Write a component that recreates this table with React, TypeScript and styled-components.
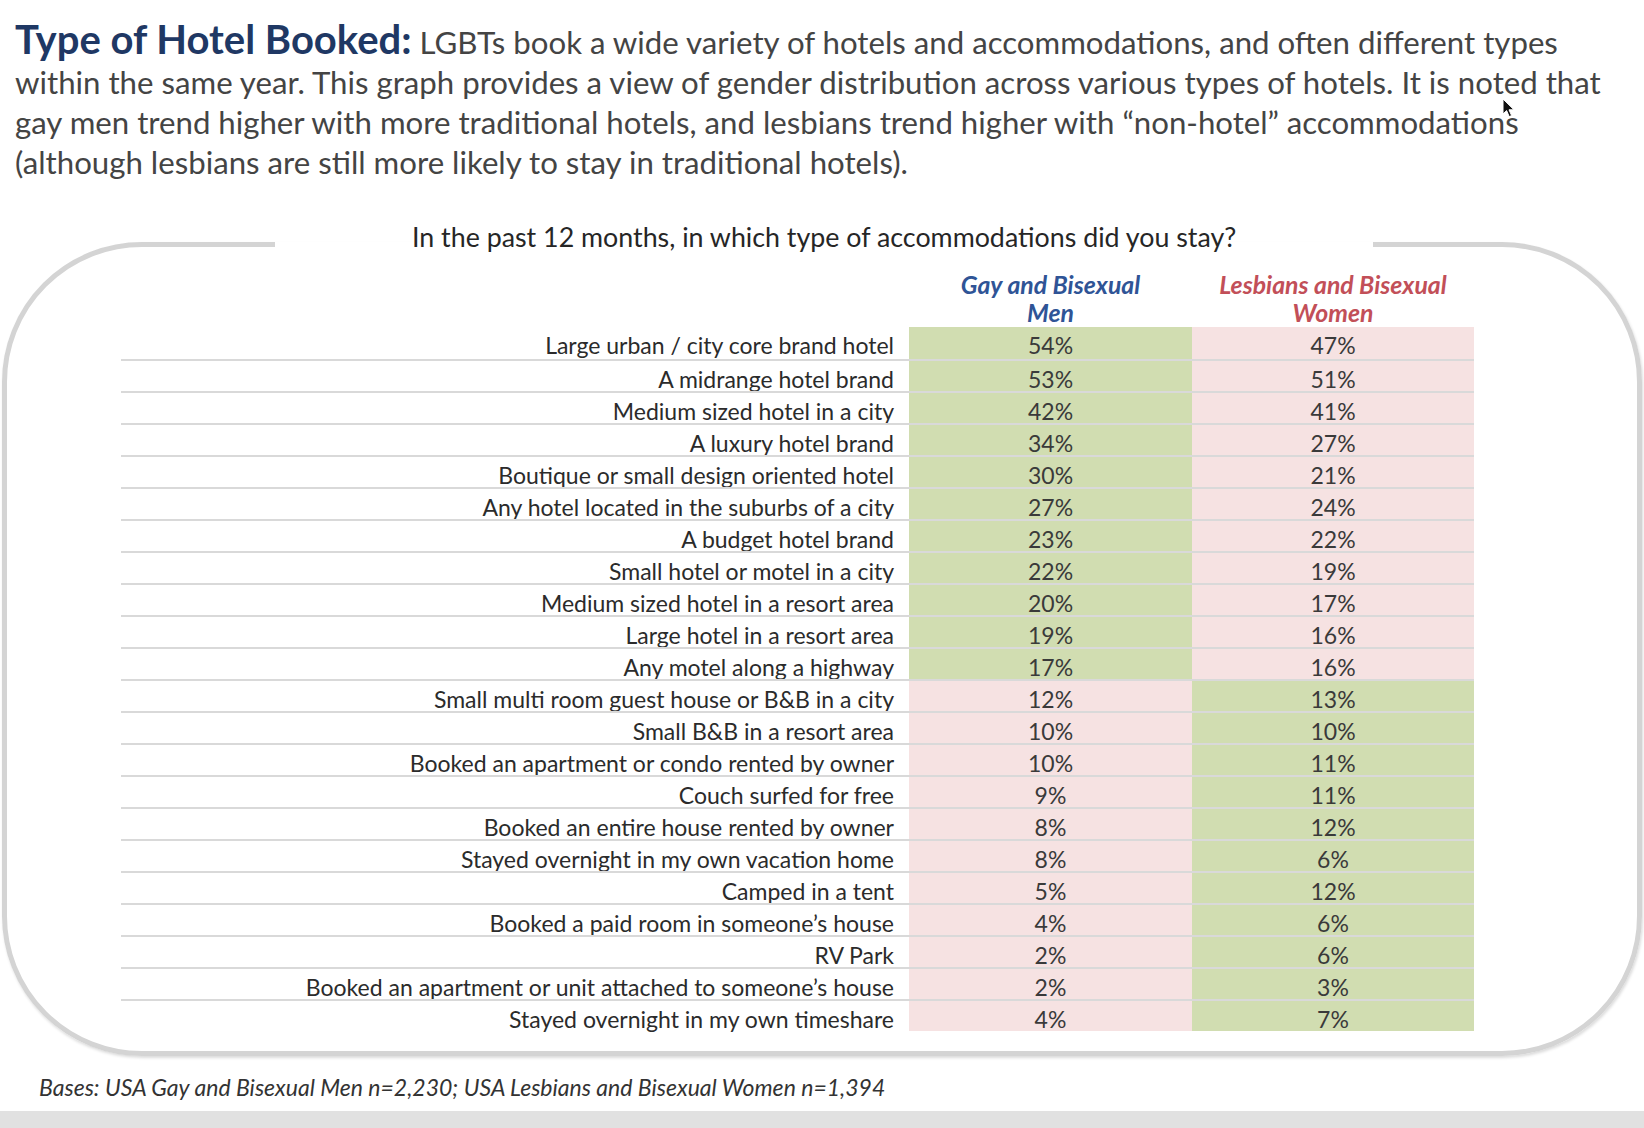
import React from "react";
import styled, { createGlobalStyle } from "styled-components";

const GlobalStyle = createGlobalStyle`
  html, body {
    margin: 0;
    padding: 0;
    background: #ffffff;
  }
  body {
    font-family: "Lato", "Open Sans", "Liberation Sans", sans-serif;
    color: #444444;
  }
`;

type Row = { label: string; men: number; women: number };

const rows: Row[] = [
  { label: "Large urban / city core brand hotel", men: 54, women: 47 },
  { label: "A midrange hotel brand", men: 53, women: 51 },
  { label: "Medium sized hotel in a city", men: 42, women: 41 },
  { label: "A luxury hotel brand", men: 34, women: 27 },
  { label: "Boutique or small design oriented hotel", men: 30, women: 21 },
  { label: "Any hotel located in the suburbs of a city", men: 27, women: 24 },
  { label: "A budget hotel brand", men: 23, women: 22 },
  { label: "Small hotel or motel in a city", men: 22, women: 19 },
  { label: "Medium sized hotel in a resort area", men: 20, women: 17 },
  { label: "Large hotel in a resort area", men: 19, women: 16 },
  { label: "Any motel along a highway", men: 17, women: 16 },
  { label: "Small multi room guest house or B&B in a city", men: 12, women: 13 },
  { label: "Small B&B in a resort area", men: 10, women: 10 },
  { label: "Booked an apartment or condo rented by owner", men: 10, women: 11 },
  { label: "Couch surfed for free", men: 9, women: 11 },
  { label: "Booked an entire house rented by owner", men: 8, women: 12 },
  { label: "Stayed overnight in my own vacation home", men: 8, women: 6 },
  { label: "Camped in a tent", men: 5, women: 12 },
  { label: "Booked a paid room in someone’s house", men: 4, women: 6 },
  { label: "RV Park", men: 2, women: 6 },
  { label: "Booked an apartment or unit attached to someone’s house", men: 2, women: 3 },
  { label: "Stayed overnight in my own timeshare", men: 4, women: 7 },
];

// first eleven rows are the "traditional hotel" block where men lead
const MEN_BLOCK = 11;

export default function App() {
  return (
    <Page>
      <GlobalStyle />
      <Intro>
        <Title>Type of Hotel Booked:</Title> LGBTs book a wide variety of hotels and
        accommodations, and often different types within the same year. This graph provides
        a view of gender distribution across various types of hotels. It is noted that gay men
        trend higher with more traditional hotels, and lesbians trend higher with “non-hotel”
        accommodations (although lesbians are still more likely to stay in traditional hotels).
      </Intro>

      <Frame>
        <Question>In the past 12 months, in which type of accommodations did you stay?</Question>
        <Table>
          <HeadRow>
            <span />
            <HeadCell $tone="men">
              Gay and Bisexual
              <br />
              Men
            </HeadCell>
            <HeadCell $tone="women">
              Lesbians and Bisexual
              <br />
              Women
            </HeadCell>
          </HeadRow>
          {rows.map((r, i) => (
            <DataRow key={r.label}>
              <Label>{r.label}</Label>
              <Value $lead={i < MEN_BLOCK}>{r.men}%</Value>
              <Value $lead={i >= MEN_BLOCK}>{r.women}%</Value>
            </DataRow>
          ))}
        </Table>
      </Frame>

      <Bases>
        Bases: USA Gay and Bisexual Men n=2,230; USA Lesbians and Bisexual Women n=1,394
      </Bases>
      <BottomBand />

      <Cursor width="13" height="20" viewBox="0 0 13 20">
        <path d="M1 1 L1 16 L4.6 12.6 L7.2 18.6 L9.6 17.6 L7 11.8 L12 11.8 Z" fill="#111" stroke="#fff" strokeWidth="1" />
      </Cursor>
    </Page>
  );
}

const Page = styled.div`
  position: relative;
  width: 1644px;
  min-height: 1128px;
  display: flex;
  flex-direction: column;
`;

const Intro = styled.p`
  margin: 0;
  padding: 19px 6px 0 15px;
  font-size: 31.2px;
  line-height: 40px;
  color: #444444;
`;

const Title = styled.span`
  font-size: 40px;
  font-weight: 700;
  color: #1f3864;
`;

const Frame = styled.fieldset`
  margin: 39px 2px 0;
  padding: 4px 0 20px 114px;
  border: 5px solid #d4d4d4;
  border-radius: 140px;
  box-shadow: 1px 2px 3px rgba(0, 0, 0, 0.14);
  min-width: 0;
`;

const Question = styled.legend`
  margin: 0 0 0 154px;
  padding: 0 137px 14px;
  font-size: 26.8px;
  line-height: 32px;
  color: #262626;
`;

const Table = styled.div`
  width: 1353px;
  display: flex;
  flex-direction: column;
`;

const Grid = styled.div`
  display: grid;
  grid-template-columns: 788px 283px 282px;
`;

const HeadRow = styled(Grid)`
  font-size: 24.8px;
  line-height: 28px;
  font-style: italic;
  font-weight: 700;
  text-align: center;
`;

const HeadCell = styled.div<{ $tone: "men" | "women" }>`
  color: ${(p) => (p.$tone === "men" ? "#2f5496" : "#c24f58")};
`;

const DataRow = styled(Grid)`
  box-sizing: border-box;
  height: 32px;
  font-size: 23px;
  line-height: 24px;

  & + & {
    border-top: 2px solid #d9d9d9;
  }
`;

const Label = styled.div`
  padding: 6px 15px 0 0;
  text-align: right;
  white-space: nowrap;
  color: #2b2b2b;
`;

const Value = styled.div<{ $lead: boolean }>`
  padding-top: 6px;
  text-align: center;
  color: #3a3a3a;
  background: ${(p) => (p.$lead ? "#d1ddb1" : "#f6e2e2")};
`;

const Bases = styled.div`
  margin-top: 17px;
  padding-left: 39px;
  font-size: 23px;
  line-height: 28px;
  font-style: italic;
  color: #333333;
`;

const BottomBand = styled.div`
  margin-top: 10px;
  flex: 1;
  min-height: 16px;
  background: #e1e1e1;
`;

const Cursor = styled.svg`
  position: absolute;
  left: 1502px;
  top: 98px;
`;
